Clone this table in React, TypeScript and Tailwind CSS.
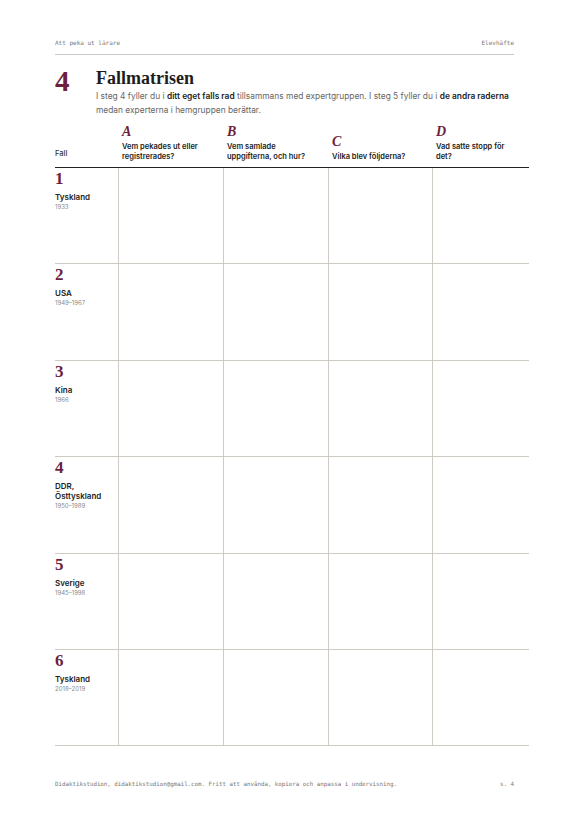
const cases = [
  { n: "1", land: "Tyskland", years: "1933" },
  { n: "2", land: "USA", years: "1949–1967" },
  { n: "3", land: "Kina", years: "1966" },
  { n: "4", land: "DDR, Östtyskland", years: "1950–1989" },
  { n: "5", land: "Sverige", years: "1945–1998" },
  { n: "6", land: "Tyskland", years: "2018–2019" },
];

const questions = [
  { letter: "A", text: "Vem pekades ut eller registrerades?" },
  { letter: "B", text: "Vem samlade uppgifterna, och hur?" },
  { letter: "C", text: "Vilka blev följderna?" },
  { letter: "D", text: "Vad satte stopp för det?" },
];

const serif = "font-['Liberation_Serif','DejaVu_Serif',serif]";
const sans = "font-['Inter','Liberation_Sans',sans-serif]";
const mono = "font-['DejaVu_Sans_Mono','Liberation_Mono',monospace]";

export default function App() {
  return (
    <div className="w-[579px] h-[819px] bg-white relative overflow-hidden">
      <div className="pt-[38px] pl-[55px] pr-[65px]">
        {/* running header */}
        <div className={`flex justify-between ${mono} text-[6px] text-[#777] pb-[7px] border-b border-[#c9c9c9]`}>
          <span>Att peka ut lärare</span>
          <span>Elevhäfte</span>
        </div>
      </div>

      <div className="pl-[55px] pr-[50px]">
        <div className="flex mt-[11px]">
          <div className={`w-[41px] ${serif} font-bold text-[29px] leading-[30px] text-[#6d1f3e]`}>4</div>
          <div className="flex-1">
            <h1 className={`${serif} font-bold text-[18px] leading-[20px] text-[#1d1d1d] mt-[2px]`}>Fallmatrisen</h1>
            <p className={`${sans} text-[8.4px] leading-[13.5px] text-[#666] mt-[2px]`}>
              I steg 4 fyller du i <b className="font-semibold text-[#1d1d1d]">ditt eget falls rad</b> tillsammans med expertgruppen. I steg 5 fyller du i{" "}
              <b className="font-semibold text-[#1d1d1d]">de andra raderna</b>
              <br />
              medan experterna i hemgruppen berättar.
            </p>
          </div>
        </div>

        {/* matrix */}
        <div className={`grid grid-cols-[63px_105px_105px_104px_97px] mt-[1px] ${sans}`}>
          <div className="flex items-end pb-[8px] text-[7.5px] font-medium text-[#333] border-b-[1.5px] border-[#222]">Fall</div>
          {questions.map((q) => (
            <div key={q.letter} className="flex flex-col justify-end pl-[4px] pr-[8px] pb-[6px] border-b-[1.5px] border-[#222] h-[50px]">
              <div className={`${serif} italic font-bold text-[14px] leading-[14px] text-[#6d1f3e] mb-[3px]`}>{q.letter}</div>
              <div className="text-[7.5px] leading-[9.5px] font-semibold text-[#222]">{q.text}</div>
            </div>
          ))}

          {cases.map((c, i) => (
            <div key={i} className="contents">
              <div className="h-[96.4px] pt-[2px] border-b border-[#cfcbc4]">
                <div className={`${serif} font-bold text-[17px] leading-[18px] text-[#6d1f3e]`}>{c.n}</div>
                <div className="text-[8px] leading-[10px] font-semibold text-[#222] mt-[4px] w-[55px]">{c.land}</div>
                <div className="text-[6px] leading-[9px] text-[#8a8a8a]">{c.years}</div>
              </div>
              {questions.map((q) => (
                <div key={q.letter} className="border-l border-b border-[#cfcbc4]" />
              ))}
            </div>
          ))}
        </div>
      </div>

      {/* footer */}
      <div className={`absolute left-[55px] right-[65px] top-[780px] flex justify-between ${mono} text-[5.8px] text-[#777]`}>
        <span>Didaktikstudion, didaktikstudion@gmail.com. Fritt att använda, kopiera och anpassa i undervisning.</span>
        <span>s. 4</span>
      </div>
    </div>
  );
}
